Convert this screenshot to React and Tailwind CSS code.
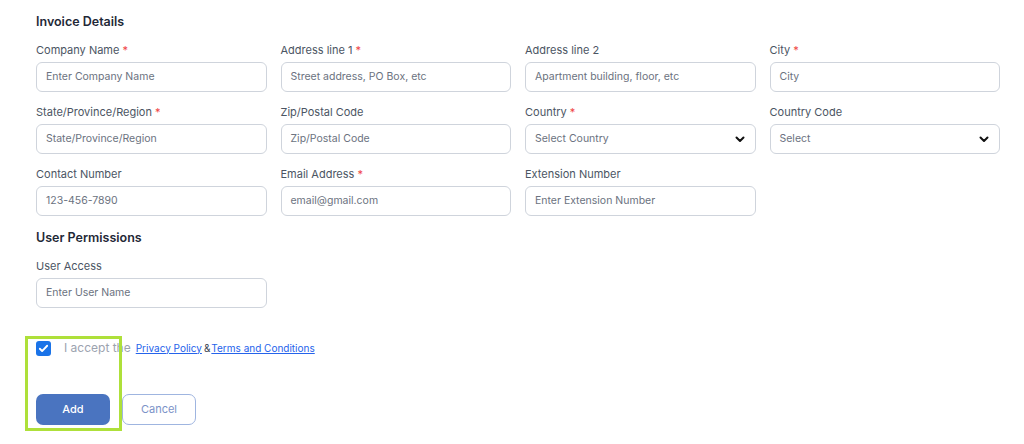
import React from 'react';

const font = { fontFamily: 'Inter, "Open Sans", sans-serif' };

const Label = ({ text, required }) => (
  <label className="block text-[11px] leading-[14px] text-[#4b5563] mb-[5px]">
    {text}
    {required && <span className="text-[#ef4444]"> *</span>}
  </label>
);

const Chevron = () => (
  <svg width="12" height="12" viewBox="0 0 24 24" fill="none" stroke="#111" strokeWidth="4" strokeLinecap="round" strokeLinejoin="round">
    <path d="M5 9l7 7 7-7" />
  </svg>
);

const Field = ({ label, required, placeholder, select }) => (
  <div>
    <Label text={label} required={required} />
    <div className="h-[30px] border border-[#cfd4dc] rounded-[6px] bg-white flex items-center justify-between pl-[9px] pr-[9px]">
      <span className="text-[10.5px] text-[#6b7280]">{placeholder}</span>
      {select && <Chevron />}
    </div>
  </div>
);

export default function App() {
  return (
    <div className="w-[1024px] h-[444px] overflow-hidden bg-white relative" style={font}>
      <div className="pl-[36px] pr-[24px] pt-[15px]">
        <h2 className="text-[12.5px] font-semibold text-[#1f2937] leading-[14px]">Invoice Details</h2>

        <div className="grid grid-cols-4 gap-x-[14px] gap-y-[13px] mt-[14px]">
          <Field label="Company Name" required placeholder="Enter Company Name" />
          <Field label="Address line 1" required placeholder="Street address, PO Box, etc" />
          <Field label="Address line 2" placeholder="Apartment building, floor, etc" />
          <Field label="City" required placeholder="City" />
          <Field label="State/Province/Region" required placeholder="State/Province/Region" />
          <Field label="Zip/Postal Code" placeholder="Zip/Postal Code" />
          <Field label="Country" required placeholder="Select Country" select />
          <Field label="Country Code" placeholder="Select" select />
          <Field label="Contact Number" placeholder="123-456-7890" />
          <Field label="Email Address" required placeholder="email@gmail.com" />
          <Field label="Extension Number" placeholder="Enter Extension Number" />
        </div>

        <h2 className="text-[12.5px] font-semibold text-[#1f2937] leading-[14px] mt-[15px]">User Permissions</h2>
        <div className="grid grid-cols-4 gap-x-[14px] mt-[14px]">
          <Field label="User Access" placeholder="Enter User Name" />
        </div>

        <div className="flex items-center mt-[33px] h-[14px]">
          <div className="w-[15px] h-[15px] rounded-[3px] bg-[#1a73e8] flex items-center justify-center">
            <svg width="11" height="11" viewBox="0 0 24 24" fill="none" stroke="white" strokeWidth="4" strokeLinecap="round" strokeLinejoin="round">
              <path d="M4 12.5l5 5L20 6" />
            </svg>
          </div>
          <span className="ml-[13px] text-[12px] text-[#9ca3af]">I accept the</span>
          <a className="ml-[5px] text-[10px] text-[#2563eb] underline">Privacy Policy</a>
          <span className="text-[10px] text-[#374151] ml-[2px]">&amp;</span>
          <a className="ml-[1px] text-[10px] text-[#2563eb] underline">Terms and Conditions</a>
        </div>

        <div className="flex gap-[12px] mt-[39px]">
          <button className="w-[74px] h-[31px] rounded-[7px] bg-[#4a74c0] text-white text-[11px] font-medium">Add</button>
          <button className="w-[74px] h-[31px] rounded-[7px] border border-[#9fb5e0] bg-white text-[#7b93c8] text-[11px]">Cancel</button>
        </div>

        <p className="mt-[16px] ml-[20px] text-[15px] leading-[20px] text-[#222]">Fill in the details and click Add.</p>
      </div>

      <div className="absolute left-[25px] top-[336px] w-[97px] h-[95px] border-[3px] border-[#aee03a]" />
    </div>
  );
}
